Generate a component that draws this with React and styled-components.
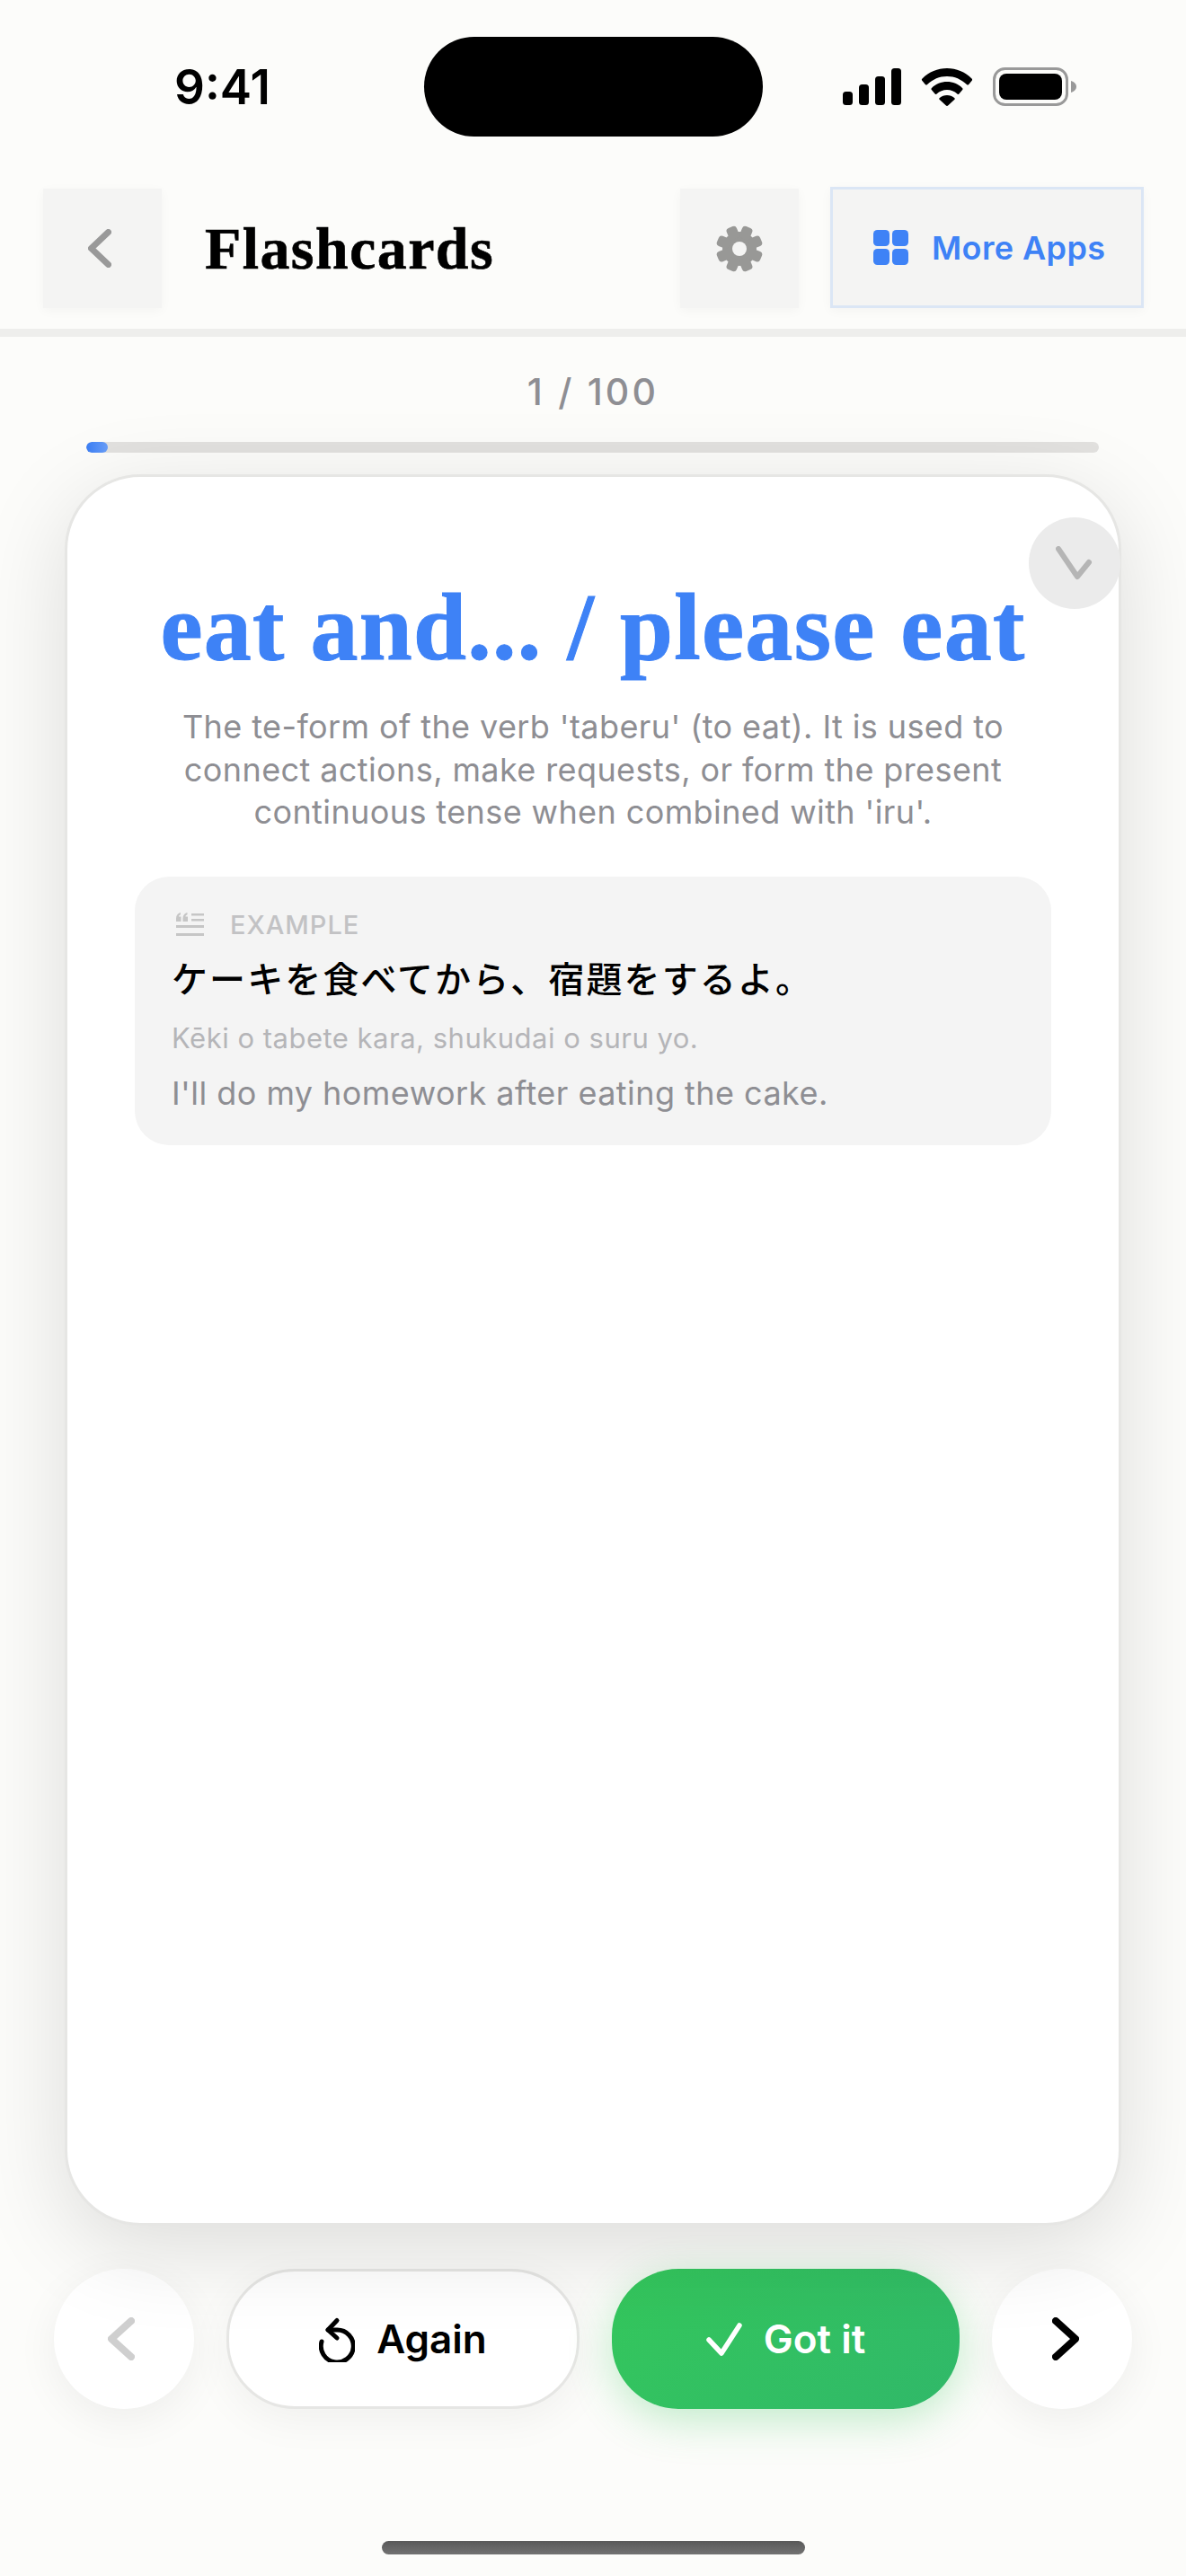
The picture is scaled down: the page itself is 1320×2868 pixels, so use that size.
import React from 'react'
import styled, { createGlobalStyle } from 'styled-components'

const GlobalStyle = createGlobalStyle`
  html, body {
    margin: 0;
    padding: 0;
    background: #fcfcfa;
  }
  * {
    box-sizing: border-box;
  }
`

const sans = `Inter, "Noto Sans CJK JP", sans-serif`
const serif = `"Liberation Serif", serif`

function Signal() {
  return (
    <svg width="65" height="41" viewBox="0 0 65 41" fill="#000">
      <rect x="0" y="26" width="11" height="15" rx="3.5" />
      <rect x="18" y="18" width="11" height="23" rx="3.5" />
      <rect x="36" y="9" width="11" height="32" rx="3.5" />
      <rect x="54" y="0" width="11" height="41" rx="3.5" />
    </svg>
  )
}

function Wifi() {
  return (
    <svg width="58" height="42" viewBox="0 0 58 42" fill="#000">
      <path d="M29 0c10.500 0 20 4 27.500 11.500c.8.800.8 1.500.2 2.200l-3.500 4.300c-.7.800-1.500.8-2.300.1C44.800 12.300 37.500 9 29 9S13.200 12.300 7.100 18.100c-.8.700-1.600.7-2.300-.1L1.300 13.700c-.6-.7-.6-1.400.2-2.200C9 4 18.500 0 29 0z" />
      <path d="M29 15c6.500 0 12.500 2.500 17 6.900c.7.700.7 1.300.2 2l-3.600 4.400c-.6.800-1.400.8-2.200.1C37.300 25.600 33.400 24 29 24s-8.300 1.600-11.400 4.400c-.8.700-1.600.7-2.200-.1l-3.600-4.400c-.5-.7-.5-1.300.2-2C16.500 17.500 22.500 15 29 15z" />
      <path d="M29 30c3.100 0 6 1.100 8.200 3c.7.600.7 1.200.2 1.800l-7 6.500c-.8.900-2 .9-2.800 0l-7-6.500c-.5-.6-.5-1.200.2-1.800c2.200-1.900 5.100-3 8.200-3z" />
    </svg>
  )
}

function Battery() {
  return (
    <svg width="93" height="43" viewBox="0 0 93 43">
      <rect x="1.500" y="1.500" width="81" height="40" rx="12" fill="none" stroke="#999" strokeWidth="3" />
      <rect x="7" y="7" width="70" height="29" rx="8" fill="#000" />
      <path d="M87 15c3.500 1 6 3.500 6 6.500s-2.500 5.500-6 6.500z" fill="#999" />
    </svg>
  )
}

function Chevron({ dir = 'left', w, h, color, sw, shift = 0 }) {
  const pts = dir === 'left'
    ? `${w - sw / 2} ${sw / 2} ${sw / 2} ${h / 2} ${w - sw / 2} ${h - sw / 2}`
    : `${sw / 2} ${sw / 2} ${w - sw / 2} ${h / 2} ${sw / 2} ${h - sw / 2}`
  return (
    <ChevronSvg $shift={shift} width={w} height={h} viewBox={`0 0 ${w} ${h}`} fill="none">
      <polyline points={pts} stroke={color} strokeWidth={sw} strokeLinecap="round" strokeLinejoin="round" />
    </ChevronSvg>
  )
}

function Gear() {
  const teeth = [0, 45, 90, 135, 180, 225, 270, 315]
  return (
    <svg width="52" height="52" viewBox="-26 -26 52 52" fill="#989896">
      <circle r="19" />
      {teeth.map((a) => (
        <rect key={a} x="-6" y="-26" width="12" height="14" rx="3.500" transform={`rotate(${a + 22.5})`} />
      ))}
      <circle r="8" fill="#f4f4f3" />
    </svg>
  )
}

function AppsGrid() {
  return (
    <svg width="39" height="39" viewBox="0 0 39 39" fill="#3e82f6">
      <rect x="0" y="0" width="18" height="18" rx="4.500" />
      <rect x="21" y="0" width="18" height="18" rx="4.500" />
      <rect x="0" y="21" width="18" height="18" rx="4.500" />
      <rect x="21" y="21" width="18" height="18" rx="4.500" />
    </svg>
  )
}

function QuoteLines() {
  return (
    <svg width="31" height="26" viewBox="0 0 31 26" fill="#c6c6c6">
      <path d="M0 6.500C0 3 2 .8 5 0v2.200C3.700 2.700 3 3.500 3 4.500h2.500V10H0zM7.500 6.500C7.500 3 9.500.8 12.500 0v2.200c-1.300.5-2 1.300-2 2.300H13V10H7.500z" />
      <rect x="17" y="1" width="14" height="2.500" />
      <rect x="17" y="7" width="14" height="2.500" />
      <rect x="0" y="14" width="31" height="3" />
      <rect x="0" y="23" width="31" height="3" />
    </svg>
  )
}

function AgainIcon() {
  return (
    <svg width="40" height="52" viewBox="17 8 40 52" fill="none" stroke="#000" strokeWidth="5" strokeLinecap="round" strokeLinejoin="round">
      <path d="M27 24H37A18 18 0 1 1 20 37" />
      <polyline points="37 13.500 27 24 37 33" />
    </svg>
  )
}

function CheckIcon() {
  return (
    <svg width="40" height="37" viewBox="0 0 40 37" fill="none" stroke="#fff" strokeWidth="5.500" strokeLinecap="round" strokeLinejoin="round">
      <polyline points="3 19 17 34 37 3" />
    </svg>
  )
}

function App() {
  return (
    <>
      <GlobalStyle />
      <Page>
        <StatusBar>
          <Time>9:41</Time>
          <Island />
          <StatusIcons>
            <Signal />
            <Wifi />
            <Battery />
          </StatusIcons>
        </StatusBar>

        <Header>
          <IconButton>
            <Chevron dir="left" w={26} h={43} color="#999" sw={7} shift={-6} />
          </IconButton>
          <Title>Flashcards</Title>
          <IconButton>
            <Gear />
          </IconButton>
          <AppsButton>
            <AppsGrid />
            More Apps
          </AppsButton>
        </Header>

        <Counter>1 / 100</Counter>
        <Track>
          <Fill $percent={2} />
        </Track>

        <Card>
          <FlipBadge>
            <svg width="42" height="38" viewBox="0 0 42 38" fill="none">
              <polyline points="3 3 24 34 37 18" stroke="#b5b5b5" strokeWidth="6" strokeLinecap="round" strokeLinejoin="round" />
            </svg>
          </FlipBadge>
          <Word>eat and... / please eat</Word>
          <Meaning>
            The te-form of the verb 'taberu' (to eat). It is used to connect actions, make requests, or form the present continuous tense when combined with 'iru'.
          </Meaning>
          <ExampleBox>
            <ExampleHead>
              <QuoteLines />
              <ExampleLabel>EXAMPLE</ExampleLabel>
            </ExampleHead>
            <Japanese>ケーキを食べてから、宿題をするよ。</Japanese>
            <Romaji>Kēki o tabete kara, shukudai o suru yo.</Romaji>
            <Translation>I'll do my homework after eating the cake.</Translation>
          </ExampleBox>
        </Card>

        <Controls>
          <RoundButton>
            <Chevron dir="left" w={30} h={48} color="#cfcfcf" sw={8} shift={-7} />
          </RoundButton>
          <AgainButton>
            <AgainIcon />
            Again
          </AgainButton>
          <GotItButton>
            <CheckIcon />
            Got it
          </GotItButton>
          <RoundButton>
            <Chevron dir="right" w={30} h={48} color="#000" sw={8} shift={7} />
          </RoundButton>
        </Controls>

        <HomeBar />
      </Page>
    </>
  )
}

export default App

const Page = styled.div`
  width: 1320px;
  height: 2868px;
  overflow: hidden;
  display: flex;
  flex-direction: column;
  background: #fcfcfa;
  font-family: ${sans};
`

const ChevronSvg = styled.svg`
  margin-left: ${(p) => p.$shift}px;
`

const StatusBar = styled.div`
  flex: none;
  display: grid;
  grid-template-columns: 1fr 377px 1fr;
  align-items: center;
  height: 111px;
  margin-top: 41px;
  margin-bottom: 58px;
`

const Time = styled.div`
  justify-self: start;
  margin-left: 194px;
  font-size: 53px;
  font-weight: 600;
  color: #000;
`

const Island = styled.div`
  height: 111px;
  border-radius: 56px;
  background: #000;
`

const StatusIcons = styled.div`
  display: flex;
  align-items: center;
  gap: 22px;
  margin-left: 89px;
`

const Header = styled.header`
  flex: none;
  display: flex;
  align-items: center;
  gap: 35px;
  padding: 0 47px 23px 48px;
  border-bottom: 9px solid #eeeeec;
`

const IconButton = styled.div`
  flex: none;
  display: flex;
  align-items: center;
  justify-content: center;
  width: 132px;
  height: 133px;
  background: #f4f4f3;
  box-shadow: 0 3px 12px rgba(0, 0, 0, 0.035);
`

const Title = styled.h1`
  flex: 1;
  margin: 0 0 0 13px;
  font-family: ${serif};
  font-size: 66px;
  font-weight: 700;
  letter-spacing: 1.4px;
  -webkit-text-stroke: 0.6px #000;
  color: #000;
`

const AppsButton = styled.div`
  flex: none;
  display: flex;
  align-items: center;
  gap: 26px;
  width: 349px;
  height: 135px;
  margin-top: -2px;
  padding-left: 45px;
  border: 3px solid #dbe6f5;
  background: #f4f4f3;
  box-shadow: 0 3px 12px rgba(0, 0, 0, 0.035);
  font-size: 36px;
  font-weight: 600;
  letter-spacing: 0.4px;
  color: #3e82f6;
`

const Counter = styled.div`
  flex: none;
  margin-top: 36px;
  text-align: center;
  font-size: 41px;
  line-height: 50px;
  font-weight: 500;
  letter-spacing: 3.2px;
  color: #8e8e93;
`

const Track = styled.div`
  flex: none;
  height: 12px;
  margin: 31px 97px 0 96px;
  border-radius: 6px;
  background: #e2e1df;
  overflow: hidden;
`

const Fill = styled.div`
  height: 100%;
  width: ${(p) => p.$percent}%;
  min-width: 24px;
  border-radius: 6px;
  background: linear-gradient(90deg, #3b7ff5, #6a9ff8);
`

const Card = styled.main`
  flex: none;
  position: relative;
  height: 1950px;
  margin: 24px 72px 0;
  padding: 108px 75px 0;
  border: 3px solid #e6e6e4;
  border-radius: 84px;
  background: #fff;
  box-shadow: 0 24px 100px rgba(0, 0, 0, 0.13);
`

const FlipBadge = styled.div`
  position: absolute;
  top: 45px;
  right: -2px;
  display: flex;
  align-items: center;
  justify-content: center;
  width: 102px;
  height: 102px;
  border-radius: 50%;
  background: #ebebeb;
`

const Word = styled.h2`
  margin: 0;
  text-align: center;
  font-family: ${serif};
  font-size: 106px;
  line-height: 120px;
  font-weight: 700;
  letter-spacing: 1.3px;
  -webkit-text-stroke: 1px #3e82f6;
  white-space: nowrap;
  color: #3e82f6;
`

const Meaning = styled.p`
  margin: 27px 0 0;
  text-align: center;
  font-size: 36px;
  line-height: 47.5px;
  letter-spacing: 0.4px;
  color: #8e8e93;
`

const ExampleBox = styled.section`
  margin: 47px 0 0;
  padding: 36px 41px 0;
  height: 299px;
  border-radius: 38px;
  background: #f4f4f4;
`

const ExampleHead = styled.div`
  display: flex;
  align-items: center;
  gap: 29px;
  padding-left: 5px;
`

const ExampleLabel = styled.span`
  font-size: 29px;
  font-weight: 500;
  letter-spacing: 1px;
  color: #c2c2c4;
`

const Japanese = styled.div`
  margin-top: 12px;
  font-size: 40px;
  font-weight: 500;
  letter-spacing: 2.1px;
  color: #000;
`

const Romaji = styled.div`
  margin-top: 20px;
  font-size: 31px;
  letter-spacing: 0.5px;
  color: #b5b5b8;
`

const Translation = styled.div`
  margin-top: 21px;
  font-size: 36px;
  letter-spacing: 0.45px;
  color: #8e8e93;
`

const Controls = styled.div`
  flex: none;
  display: flex;
  align-items: center;
  gap: 36px;
  margin-top: 48px;
  padding: 0 60px;
`

const RoundButton = styled.div`
  flex: none;
  display: flex;
  align-items: center;
  justify-content: center;
  width: 156px;
  height: 156px;
  border-radius: 50%;
  background: #fff;
  box-shadow: 0 12px 48px rgba(0, 0, 0, 0.06);
`

const AgainButton = styled.div`
  flex: 1;
  display: flex;
  align-items: center;
  justify-content: center;
  gap: 24px;
  height: 156px;
  border: 3px solid #e6e6e4;
  border-radius: 76px;
  background: #fff;
  box-shadow: 0 12px 48px rgba(0, 0, 0, 0.05);
  font-size: 44px;
  font-weight: 600;
  color: #000;
`

const GotItButton = styled.div`
  flex: 1;
  display: flex;
  align-items: center;
  justify-content: center;
  gap: 24px;
  height: 156px;
  border-radius: 74px;
  background: linear-gradient(135deg, #34c75c, #30b869);
  box-shadow: 0 12px 48px rgba(52, 199, 89, 0.3);
  font-size: 44px;
  font-weight: 600;
  color: #fff;
`

const HomeBar = styled.div`
  flex: none;
  width: 471px;
  height: 15px;
  margin: 147px auto 0;
  border-radius: 8px;
  background: linear-gradient(180deg, #595959, #727272);
`
